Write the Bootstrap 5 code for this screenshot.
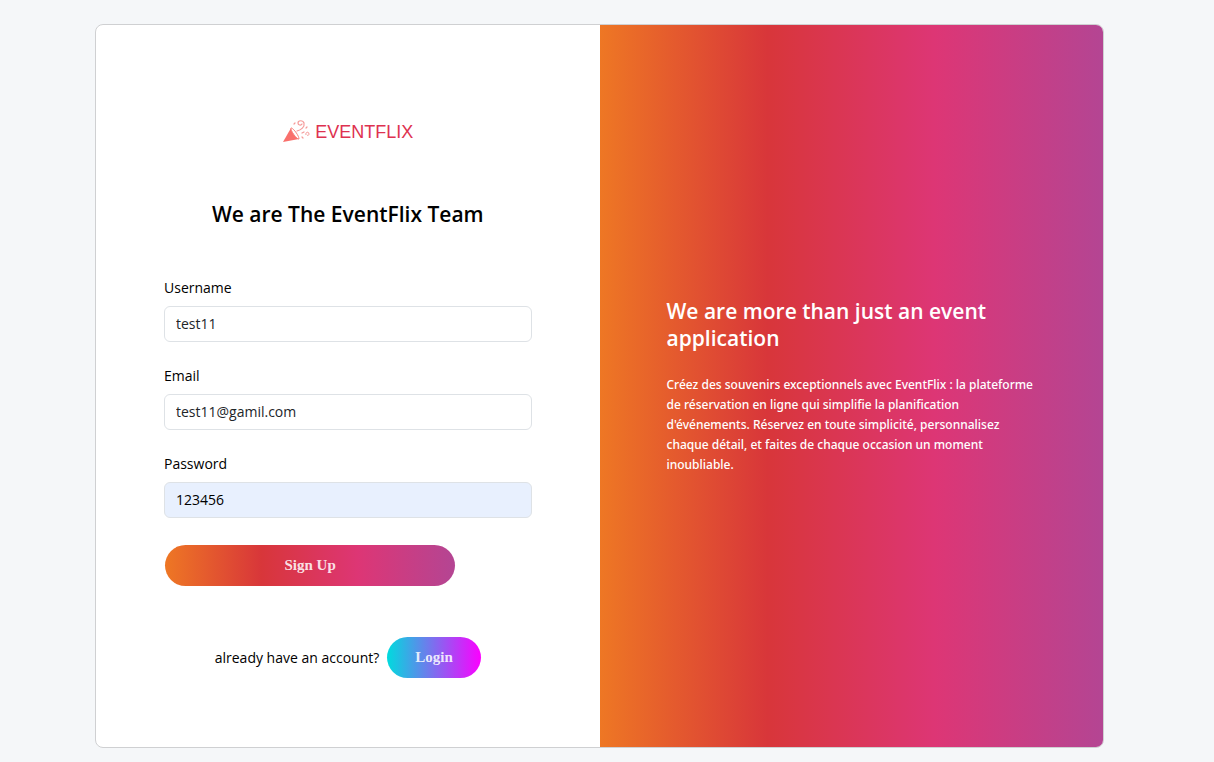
<!DOCTYPE html>
<html lang="en">
<head>
<meta charset="utf-8">
<meta name="viewport" content="width=device-width, initial-scale=1">
<title>EventFlix</title>
<link href="https://cdn.jsdelivr.net/npm/bootstrap@5.3.0/dist/css/bootstrap.min.css" rel="stylesheet">
<style>
  body { background: #f5f7f9; color: #000; font-family: "Segoe UI", "Open Sans", sans-serif; font-size: 14px; line-height: 22px; }
  .page-wrap { padding: 24px 110px 14px 95px; }
  .signup-card { border: 1px solid #cfd0d2; border-radius: 8px; color: #000; }
  .form-side { padding: 94px 68px 69px; }
  .brand-name { font-family: "Liberation Sans", sans-serif; font-size: 18px; line-height: 26px; color: #de3250; }
  .panel-title { font-size: 21px; line-height: 27px; font-weight: 600; }
  .team-title { margin: 56px 0 49px; }
  .field { margin-bottom: 23px; }
  .field label { margin-bottom: 7px; }
  .field .form-control { height: 36px; padding: 5px 11px 7px; border-color: #dee2e6; font-size: 14px; line-height: 22px; color: #212529; border-radius: 6px; }
  .field .form-control.filled { background: #e8f0fe; color: #000; }
  .btn-pill { height: 41px; padding: 0 28px; border: 0; border-radius: 21px; color: #fffd; font-family: "Liberation Serif", serif; font-size: 15px; font-weight: 700; line-height: 41px; }
  .btn-pill:hover { color: #fff; }
  .warm { background: linear-gradient(to right, #ee7724, #d8363a, #dd3675, #b44593); }
  .cool { background: linear-gradient(to right, #00dbde, #fc00ff); }
  .btn-signup { width: 79%; margin: 27px 0 51px 1px; }
  .btn-signup:hover { background: linear-gradient(to right, #ee7724, #d8363a, #dd3675, #b44593); }
  .pitch-side { padding: 24px 67px; border-radius: 0 7px 7px 0; }
  .pitch-text { margin: 23px 0 0; font-family: "Segoe UI", "Noto Sans", sans-serif; font-size: 12px; font-weight: 500; line-height: 20px; }
  @media (max-width: 991px) { .page-wrap { padding: 24px; } .pitch-side { border-radius: 0 0 7px 7px; } }
</style>
</head>
<body>
<main class="page-wrap">
  <div class="card signup-card">
    <div class="row g-0">
      <section class="col-lg-6 form-side">
        <div class="d-flex justify-content-center align-items-center gap-1">
          <svg width="29" height="26" viewBox="0 0 29 26" fill="none" aria-hidden="true">
            <path d="M1 23 9 9c3 3 6 7 8 11z" fill="#f9706c"/>
            <path d="M9 9c1-1 8 7 8 11-2 1-9-9-8-11z" fill="#fff" stroke="#f9827d"/>
            <path d="M15 12c4-1 8-4 7-8-1-3-6-3-6 0 0 2 3 3 4 1M12 5l1-1M20 14l2-1M20 18l1 1M24 9l1-1" stroke="#f59a99" stroke-width="1.2" stroke-linecap="round"/>
            <path d="M24 16c-1-3 3-4 3-1 0 1-1 2-2 1" stroke="#f59a99"/>
          </svg>
          <span class="brand-name">EVENTFLIX</span>
        </div>
        <h1 class="panel-title team-title text-center">We are The EventFlix Team</h1>
        <form>
          <div class="field">
            <label class="d-block" for="username">Username</label>
            <input class="form-control" type="text" id="username" value="test11">
          </div>
          <div class="field">
            <label class="d-block" for="email">Email</label>
            <input class="form-control" type="email" id="email" value="test11@gamil.com">
          </div>
          <div class="field">
            <label class="d-block" for="password">Password</label>
            <input class="form-control filled" type="text" id="password" value="123456">
          </div>
          <button class="btn btn-pill btn-signup warm d-block" type="submit">Sign Up</button>
          <div class="d-flex justify-content-center align-items-center gap-2">
            <span>already have an account?</span>
            <button class="btn btn-pill cool" type="button">Login</button>
          </div>
        </form>
      </section>
      <section class="col-lg-6 pitch-side warm d-flex flex-column justify-content-center text-white">
        <h2 class="panel-title mb-0">We are more than just an event application</h2>
        <p class="pitch-text">Créez des souvenirs exceptionnels avec EventFlix : la plateforme de réservation en ligne qui simplifie la planification d'événements. Réservez en toute simplicité, personnalisez chaque détail, et faites de chaque occasion un moment inoubliable.</p>
      </section>
    </div>
  </div>
</main>
<script src="https://cdn.jsdelivr.net/npm/bootstrap@5.3.0/dist/js/bootstrap.bundle.min.js"></script>
</body>
</html>
